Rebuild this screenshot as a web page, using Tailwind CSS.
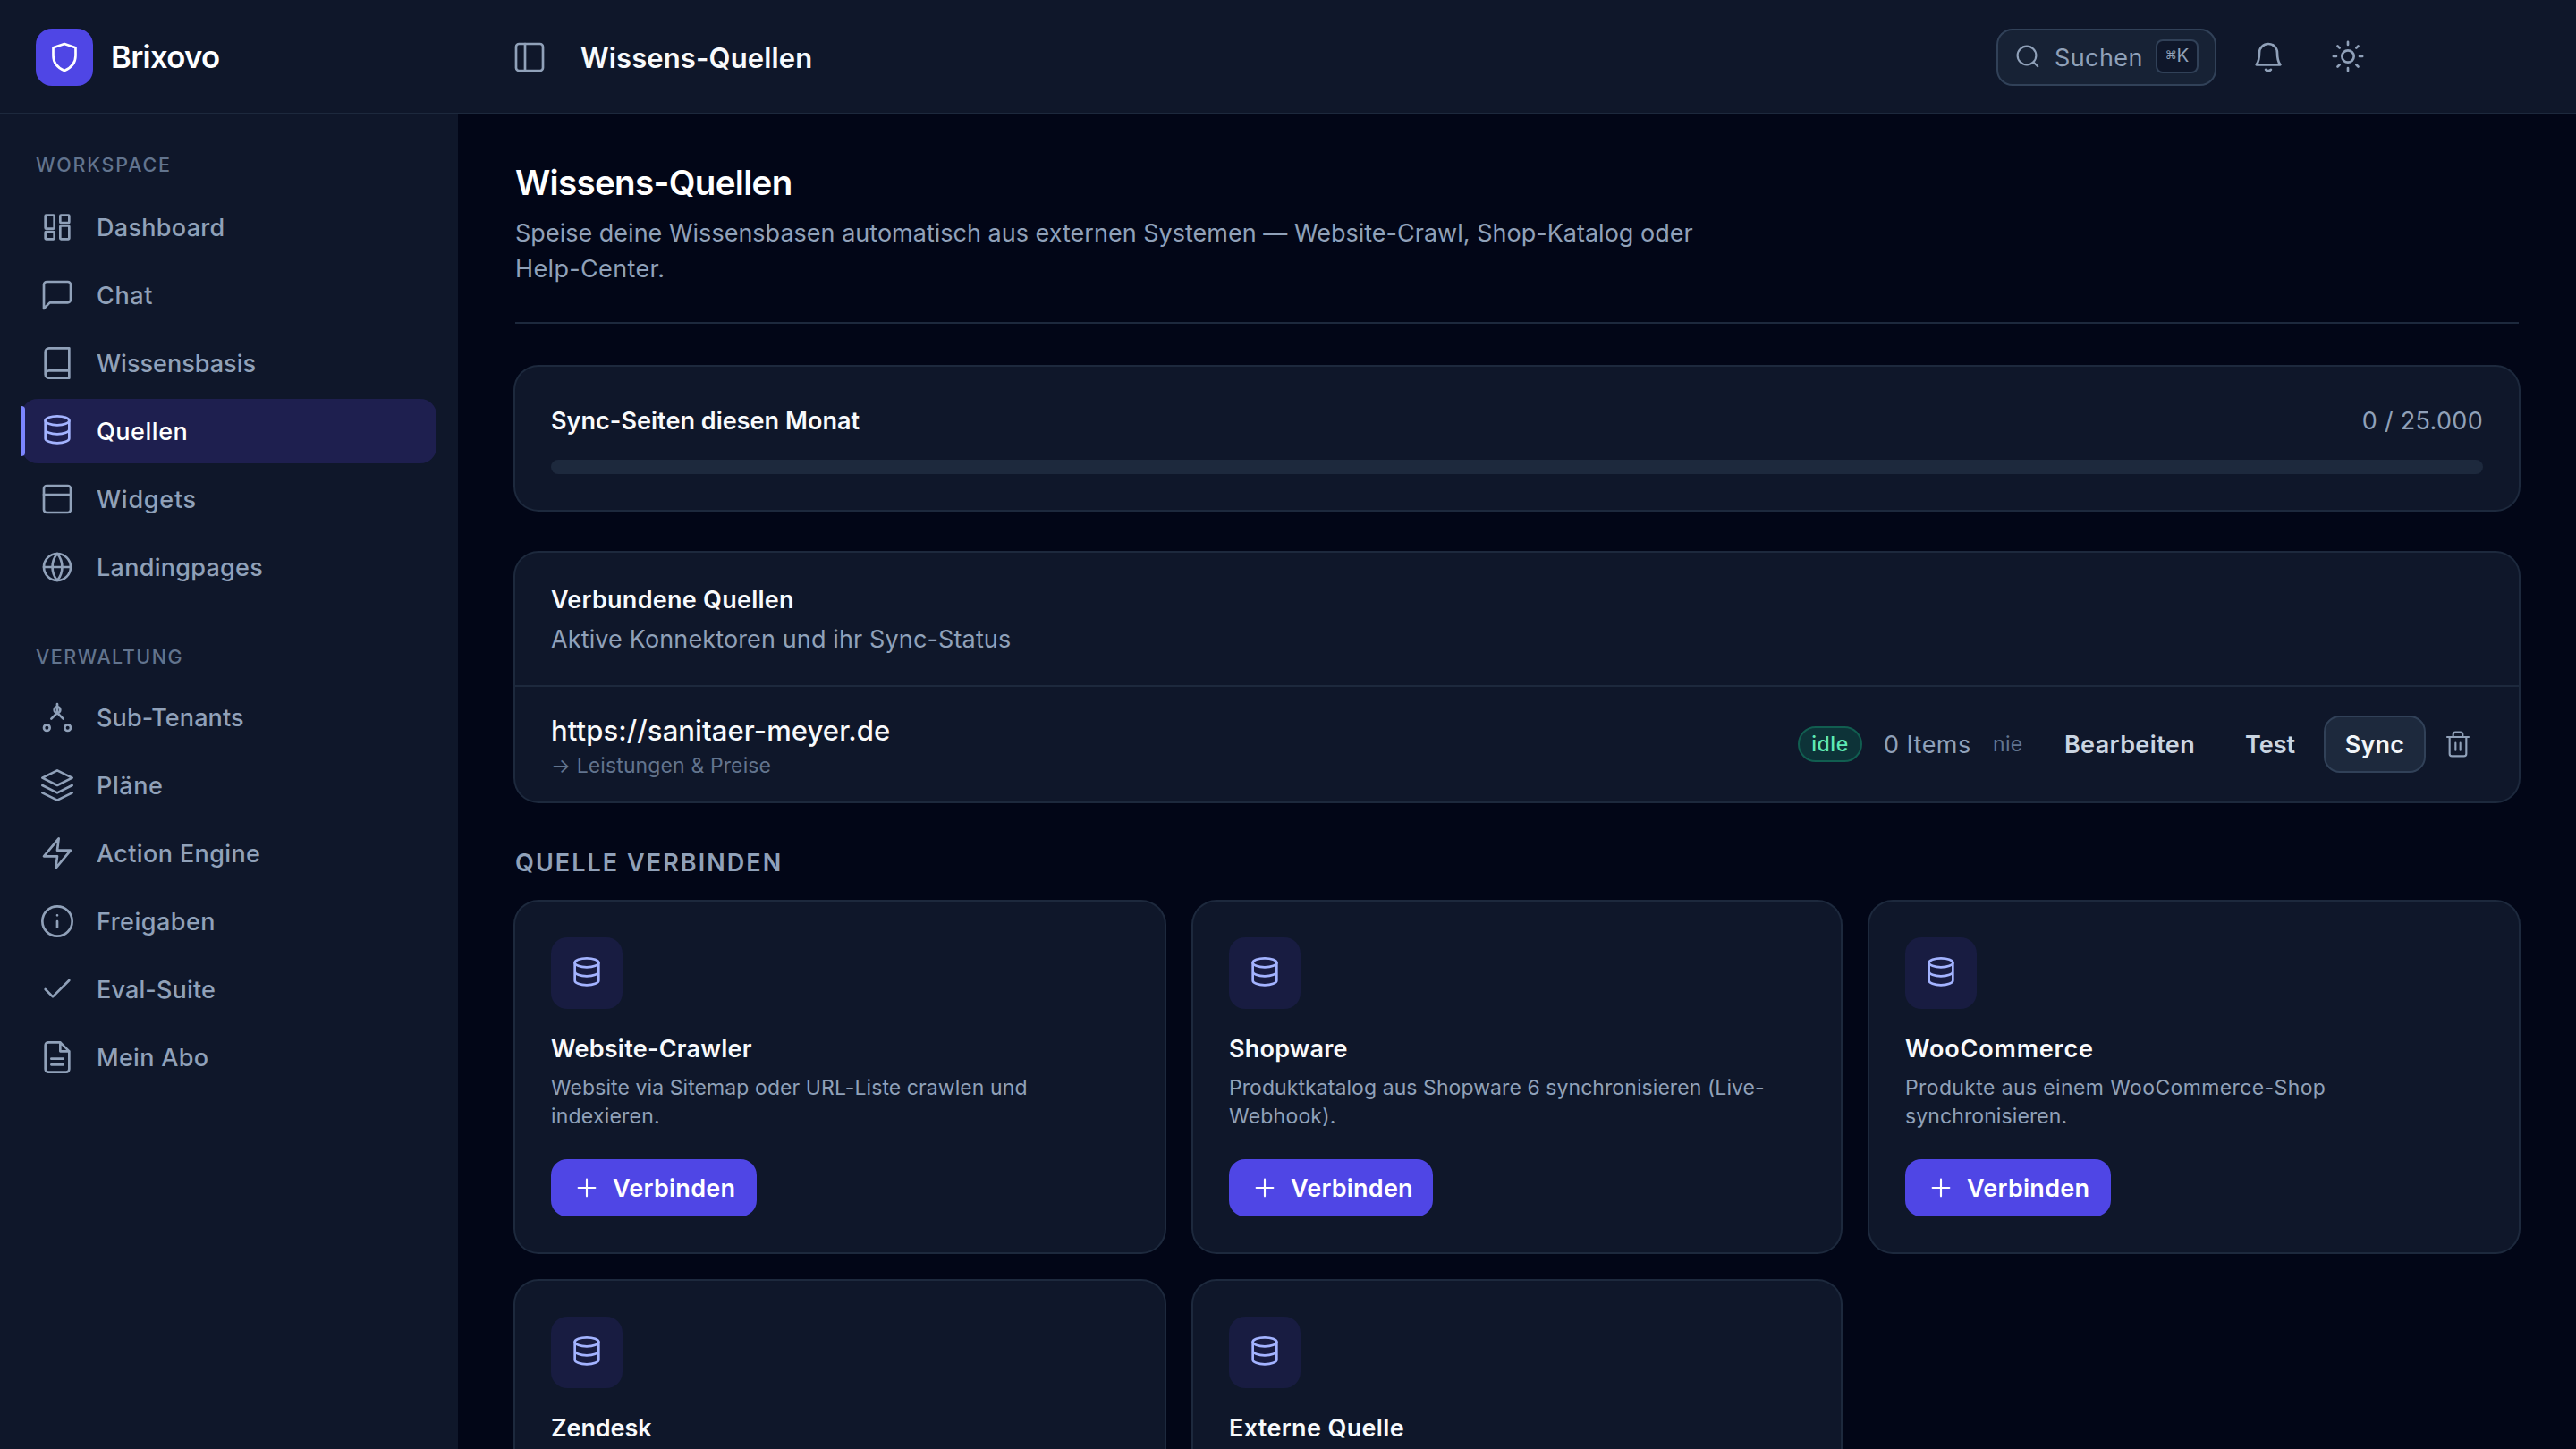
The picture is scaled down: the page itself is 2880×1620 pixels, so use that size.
<!DOCTYPE html>
<html lang="de" class="bg-slate-950">

<head>
    <meta charset="utf-8" />
    <script src="https://cdn.jsdelivr.net/npm/@tailwindcss/browser@4"></script>
    <title>Brixovo – Wissens-Quellen</title>
    <style>
        body {
            font-family: Inter, "Liberation Sans", sans-serif;
        }
    </style>
</head>

<body class="h-[1620px] overflow-hidden bg-[#020617] text-slate-50">
    <!-- Icon sprite -->
    <svg class="hidden">
        <symbol id="i-shield" viewBox="0 0 24 24"><path d="M12 3l7.5 2.6V11c0 4.9-3.2 8.2-7.5 10-4.3-1.8-7.5-5.1-7.5-10V5.6z" /></symbol>
        <symbol id="i-panel" viewBox="0 0 24 24"><rect x="3" y="3" width="18" height="18" rx="2" /><path d="M9 3v18" /></symbol>
        <symbol id="i-search" viewBox="0 0 24 24"><circle cx="10.5" cy="10.5" r="7.8" /><path d="M19.7 19.7l-3.6-3.6" /></symbol>
        <symbol id="i-bell" viewBox="0 0 24 24"><path d="M6 9a6 6 0 0 1 12 0c0 5.5 2 8 2 8H4s2-2.5 2-8M10.3 20.3c.4.5 1 .8 1.7.8s1.3-.3 1.7-.8" /></symbol>
        <symbol id="i-sun" viewBox="0 0 24 24"><circle cx="12" cy="12" r="4" /><path d="M12 2.3v1.9M12 19.8v1.9M2.3 12h1.9M19.8 12h1.9M5.1 5.1l1.3 1.3M17.6 17.6l1.3 1.3M5.1 18.9l1.3-1.3M17.6 6.4l1.3-1.3" /></symbol>
        <symbol id="i-grid" viewBox="0 0 24 24"><rect x="4" y="4" width="6" height="9" rx=".5" /><rect x="14" y="4" width="6" height="5" rx=".5" /><rect x="14" y="11" width="6" height="9" rx=".5" /><rect x="4" y="15" width="6" height="5" rx=".5" /></symbol>
        <symbol id="i-chat" viewBox="0 0 24 24"><path d="M21 15a2 2 0 0 1-2 2H7l-4 4V5a2 2 0 0 1 2-2h14a2 2 0 0 1 2 2z" /></symbol>
        <symbol id="i-book" viewBox="0 0 24 24"><path d="M4 19.5A2.5 2.5 0 0 1 6.5 17H20M6.5 2H20v20H6.5A2.5 2.5 0 0 1 4 19.5v-15A2.5 2.5 0 0 1 6.5 2z" /></symbol>
        <symbol id="i-db" viewBox="0 0 24 24"><ellipse cx="12" cy="5" rx="8" ry="3" /><path d="M4 5v12c0 1.66 3.58 3 8 3s8-1.34 8-3V5M4 11c0 1.66 3.58 3 8 3s8-1.34 8-3" /></symbol>
        <symbol id="i-window" viewBox="0 0 24 24"><rect x="3" y="3" width="18" height="18" rx="2" /><path d="M3 9h18" /></symbol>
        <symbol id="i-globe" viewBox="0 0 24 24"><circle cx="12" cy="12" r="9" /><path d="M3 12h18M12 3a14 14 0 0 1 0 18M12 3a14 14 0 0 0 0 18" /></symbol>
        <symbol id="i-tenants" viewBox="0 0 24 24"><circle cx="12" cy="7" r="2" /><circle cx="5" cy="19" r="2" /><circle cx="19" cy="19" r="2" /><path d="M12 3v6M8 13l4-4 4 4" /></symbol>
        <symbol id="i-layers" viewBox="0 0 24 24"><path d="M12 2L2 7l10 5 10-5zM2 17l10 5 10-5M2 12l10 5 10-5" /></symbol>
        <symbol id="i-zap" viewBox="0 0 24 24"><path d="M13 2L3 14h9l-1 8 10-12h-9z" /></symbol>
        <symbol id="i-info" viewBox="0 0 24 24"><circle cx="12" cy="12" r="10" /><path d="M12 16v-4M12 8h.01" /></symbol>
        <symbol id="i-check" viewBox="0 0 24 24"><path d="M20 6L9 17l-5-5" /></symbol>
        <symbol id="i-file" viewBox="0 0 24 24"><path d="M14 2H6a2 2 0 0 0-2 2v16a2 2 0 0 0 2 2h12a2 2 0 0 0 2-2V8zM14 2v6h6M8 13h8M8 17h8" /></symbol>
        <symbol id="i-trash" viewBox="0 0 24 24"><path d="M3 6h18M8 6V4a2 2 0 0 1 2-2h4a2 2 0 0 1 2 2v2M19 6v14a2 2 0 0 1-2 2H7a2 2 0 0 1-2-2V6M10 11v6M14 11v6" /></symbol>
        <symbol id="i-plus" viewBox="0 0 24 24"><path d="M12 5v14M5 12h14" /></symbol>
    </svg>

    <div class="flex h-full flex-col fill-none stroke-[1.6] [stroke-linecap:round] [stroke-linejoin:round]">
        <!-- Header -->
        <header class="flex h-32 shrink-0 items-center border-b-2 border-slate-800 bg-[#0f172a] pt-0.5">
            <div class="flex w-[572px] items-center gap-5 pl-10">
                <div class="flex size-16 items-center justify-center rounded-[18px] bg-[#4f46e5]">
                    <svg class="size-10 stroke-white"><use href="#i-shield" /></svg>
                </div>
                <span class="-mt-0.5 text-[34.7px] font-semibold tracking-[-0.7px] text-white">Brixovo</span>
            </div>
            <svg class="size-10 stroke-slate-400"><use href="#i-panel" /></svg>
            <span class="ml-[37px] pt-0.5 text-[31px] font-semibold tracking-[0.13px]">Wissens-Quellen</span>
            <div class="ml-auto flex items-center pr-[235px]">
                <div class="flex h-16 w-[246px] items-center rounded-[18px] border-2 border-slate-700 bg-slate-800/60 pl-[18px]">
                    <svg class="size-8 stroke-slate-400"><use href="#i-search" /></svg>
                    <span class="ml-[13px] w-[113px] pt-0.5 text-[27px] tracking-[0.4px] text-slate-400">Suchen</span>
                    <kbd class="-mt-0.5 flex h-[38px] w-12 items-start justify-center rounded-lg border-2 border-slate-700 bg-[#0f172a] pt-[3px] font-[Inter,'DejaVu_Sans',sans-serif] text-[20.5px] leading-[26px] text-slate-400"><span class="font-['DejaVu_Sans'] text-[13px]">⌘</span>K</kbd>
                </div>
                <svg class="ml-[38px] size-10 stroke-slate-400"><use href="#i-bell" /></svg>
                <svg class="-mt-0.5 ml-[49px] size-10 stroke-slate-400"><use href="#i-sun" /></svg>
            </div>
        </header>

        <div class="flex min-h-0 flex-1">
            <!-- Sidebar -->
            <aside class="w-[512px] shrink-0 bg-[#0f172a] px-6 pt-9 text-[27px] font-medium text-slate-400">
                <div class="flex h-10 items-center px-4 text-[21.5px] tracking-[1.8px] text-slate-500">WORKSPACE</div>
                <nav class="mt-3.5 flex flex-col gap-1 stroke-slate-400 [&_a]:pt-0.5 [&_svg]:-mt-0.5">
                    <a class="flex h-[72px] items-center gap-6 px-5 tracking-[0.3px]"><svg class="size-10"><use href="#i-grid" /></svg>Dashboard</a>
                    <a class="flex h-[72px] items-center gap-6 px-5 tracking-[0.6px]"><svg class="size-10"><use href="#i-chat" /></svg>Chat</a>
                    <a class="flex h-[72px] items-center gap-6 px-5 tracking-[0.02px]"><svg class="size-10"><use href="#i-book" /></svg>Wissensbasis</a>
                    <a class="relative flex h-[72px] items-center gap-6 rounded-[18px] bg-[#1e1f4f] px-5 tracking-[0.55px] text-white before:absolute before:left-0 before:top-2 before:h-14 before:w-1 before:rounded-r before:bg-indigo-400">
                        <svg class="size-10 stroke-indigo-300"><use href="#i-db" /></svg>Quellen</a>
                    <a class="flex h-[72px] items-center gap-6 px-5 tracking-[0.75px]"><svg class="size-10"><use href="#i-window" /></svg>Widgets</a>
                    <a class="flex h-[72px] items-center gap-6 px-5 tracking-[0.28px]"><svg class="size-10"><use href="#i-globe" /></svg>Landingpages</a>
                </nav>
                <div class="mt-11 flex h-10 items-center px-4 text-[21.5px] tracking-[1.5px] text-slate-500">VERWALTUNG</div>
                <nav class="mt-3 flex flex-col gap-1 stroke-slate-400 [&_a]:pt-0.5 [&_svg]:-mt-0.5">
                    <a class="flex h-[72px] items-center gap-6 px-5 tracking-[0.1px]"><svg class="size-10"><use href="#i-tenants" /></svg>Sub-Tenants</a>
                    <a class="flex h-[72px] items-center gap-6 px-5 tracking-[0.6px]"><svg class="size-10"><use href="#i-layers" /></svg>Pläne</a>
                    <a class="flex h-[72px] items-center gap-6 px-5 tracking-[0.38px]"><svg class="size-10"><use href="#i-zap" /></svg>Action Engine</a>
                    <a class="flex h-[72px] items-center gap-6 px-5 tracking-[0.48px]"><svg class="size-10"><use href="#i-info" /></svg>Freigaben</a>
                    <a class="flex h-[72px] items-center gap-6 px-5 tracking-[0.15px]"><svg class="size-10"><use href="#i-check" /></svg>Eval-Suite</a>
                    <a class="flex h-[72px] items-center gap-6 px-5 tracking-[0.3px]"><svg class="size-10"><use href="#i-file" /></svg>Mein Abo</a>
                </nav>
            </aside>

            <!-- Content -->
            <main class="w-[2304px] shrink-0 pl-16 pt-12">
                <div class="border-b-2 border-slate-800 pb-[39px]">
                    <h1 class="text-[38.5px] font-semibold leading-[56px] tracking-[-0.67px] text-white">Wissens-Quellen</h1>
                    <p class="mt-[9px] text-[27px] leading-10 text-slate-400"><span class="tracking-[0.01px]">Speise deine Wissensbasen automatisch aus externen Systemen — Website-Crawl, Shop-Katalog oder</span><br><span class="tracking-[0.35px]">Help-Center.</span></p>
                </div>

                <!-- Monthly quota -->
                <section class="mt-12 h-40 rounded-[26px] bg-[#0f172a] p-10 pt-[41px] ring-2 ring-slate-800">
                    <div class="flex items-center justify-between text-[27px] leading-10">
                        <h2 class="font-semibold tracking-[0.03px]">Sync-Seiten diesen Monat</h2>
                        <span class="tracking-[0.3px] text-slate-400">0 / 25.000</span>
                    </div>
                    <div class="mt-[23px] h-4 rounded-full bg-slate-800"></div>
                </section>

                <!-- Connected sources -->
                <section class="mt-12 rounded-[26px] bg-[#0f172a] ring-2 ring-slate-800">
                    <div class="border-b-2 border-slate-800 px-10 pb-[31px] pt-[33px] text-[27px] leading-10">
                        <h2 class="font-semibold tracking-[0.26px]">Verbundene Quellen</h2>
                        <p class="mt-1 tracking-[0.13px] text-slate-400">Aktive Konnektoren und ihr Sync-Status</p>
                    </div>
                    <div class="flex h-32 items-center px-10">
                        <div>
                            <div class="pt-px text-[31px] font-medium leading-[48px] tracking-[0.1px]">https://sanitaer-meyer.de</div>
                            <div class="-mt-px text-[23px] leading-8 tracking-[0.12px] text-slate-500">→ Leistungen &amp; Preise</div>
                        </div>
                        <div class="ml-auto flex items-center gap-6">
                            <span class="flex h-10 w-[72px] items-center justify-center rounded-full border-2 border-[#115e50] bg-[#0d3338] text-[23px] font-medium tracking-[0.6px] text-emerald-300">idle</span>
                            <span class="w-[98px] whitespace-nowrap pt-0.5 text-[27px] tracking-[0.45px] text-slate-400">0 Items</span>
                            <span class="w-8 text-[23px] tracking-[0.3px] text-slate-500">nie</span>
                            <div class="flex items-center gap-2 text-[27px] font-semibold text-slate-300">
                                <button class="h-16 w-[194px] pt-0.5 tracking-[0.38px]">Bearbeiten</button>
                                <button class="h-16 w-[104px] pt-0.5">Test</button>
                                <button class="h-16 w-[114px] rounded-[18px] border-2 border-slate-700 bg-slate-800 pt-0.5 tracking-[0.2px] text-slate-100">Sync</button>
                                <button class="flex h-16 w-14 items-center justify-center"><svg class="size-8 stroke-slate-400"><use href="#i-trash" /></svg></button>
                            </div>
                        </div>
                    </div>
                </section>

                <h2 class="mt-[49px] text-[27px] font-semibold leading-10 tracking-[2.05px] text-slate-400">QUELLE VERBINDEN</h2>

                <!-- Available connectors -->
                <div class="mt-[23px] grid grid-cols-[726px_724px_726px] gap-8">
                    <div class="h-[392px] rounded-[26px] bg-[#0f172a] p-10 ring-2 ring-slate-800">
                        <div class="flex size-20 items-center justify-center rounded-[18px] bg-[#181c41]"><svg class="size-10 stroke-indigo-300"><use href="#i-db" /></svg></div>
                        <h3 class="mt-[25px] text-[27px] font-semibold leading-10 tracking-[0.25px]">Website-Crawler</h3>
                        <p class="mt-[7px] text-[23px] leading-8 text-slate-400"><span class="tracking-[0.08px]">Website via Sitemap oder URL-Liste crawlen und</span><br><span class="tracking-[0.2px]">indexieren.</span></p>
                        <button class="mt-8 flex h-16 w-[230px] items-center gap-[13px] rounded-[18px] bg-[#4f46e5] pl-6 pt-0.5 text-[27px] font-semibold tracking-[0.25px] text-white"><svg class="-mt-0.5 size-8 stroke-white"><use href="#i-plus" /></svg>Verbinden</button>
                    </div>
                    <div class="h-[392px] rounded-[26px] bg-[#0f172a] p-10 ring-2 ring-slate-800">
                        <div class="flex size-20 items-center justify-center rounded-[18px] bg-[#181c41]"><svg class="size-10 stroke-indigo-300"><use href="#i-db" /></svg></div>
                        <h3 class="mt-[25px] text-[27px] font-semibold leading-10 tracking-[0.2px]">Shopware</h3>
                        <p class="mt-[7px] text-[23px] leading-8 text-slate-400"><span class="tracking-[0.07px]">Produktkatalog aus Shopware 6 synchronisieren (Live-</span><br><span class="tracking-[0.2px]">Webhook).</span></p>
                        <button class="mt-8 flex h-16 w-[228px] items-center gap-[13px] rounded-[18px] bg-[#4f46e5] pl-6 pt-0.5 text-[27px] font-semibold tracking-[0.2px] text-white"><svg class="-mt-0.5 size-8 stroke-white"><use href="#i-plus" /></svg>Verbinden</button>
                    </div>
                    <div class="h-[392px] rounded-[26px] bg-[#0f172a] p-10 ring-2 ring-slate-800">
                        <div class="flex size-20 items-center justify-center rounded-[18px] bg-[#181c41]"><svg class="size-10 stroke-indigo-300"><use href="#i-db" /></svg></div>
                        <h3 class="mt-[25px] text-[27px] font-semibold leading-10 tracking-[0.82px]">WooCommerce</h3>
                        <p class="mt-[7px] text-[23px] leading-8 text-slate-400"><span class="tracking-[0.38px]">Produkte aus einem WooCommerce-Shop</span><br><span class="tracking-[0.1px]">synchronisieren.</span></p>
                        <button class="mt-8 flex h-16 w-[230px] items-center gap-[13px] rounded-[18px] bg-[#4f46e5] pl-6 pt-0.5 text-[27px] font-semibold tracking-[0.25px] text-white"><svg class="-mt-0.5 size-8 stroke-white"><use href="#i-plus" /></svg>Verbinden</button>
                    </div>
                    <div class="h-[392px] rounded-[26px] bg-[#0f172a] p-10 ring-2 ring-slate-800">
                        <div class="flex size-20 items-center justify-center rounded-[18px] bg-[#181c41]"><svg class="size-10 stroke-indigo-300"><use href="#i-db" /></svg></div>
                        <h3 class="mt-[25px] text-[27px] font-semibold leading-10 tracking-[-0.1px]">Zendesk</h3>
                    </div>
                    <div class="h-[392px] rounded-[26px] bg-[#0f172a] p-10 ring-2 ring-slate-800">
                        <div class="flex size-20 items-center justify-center rounded-[18px] bg-[#181c41]"><svg class="size-10 stroke-indigo-300"><use href="#i-db" /></svg></div>
                        <h3 class="mt-[25px] text-[27px] font-semibold leading-10 tracking-[0.35px]">Externe Quelle</h3>
                    </div>
                </div>
            </main>
        </div>
    </div>
</body>

</html>
